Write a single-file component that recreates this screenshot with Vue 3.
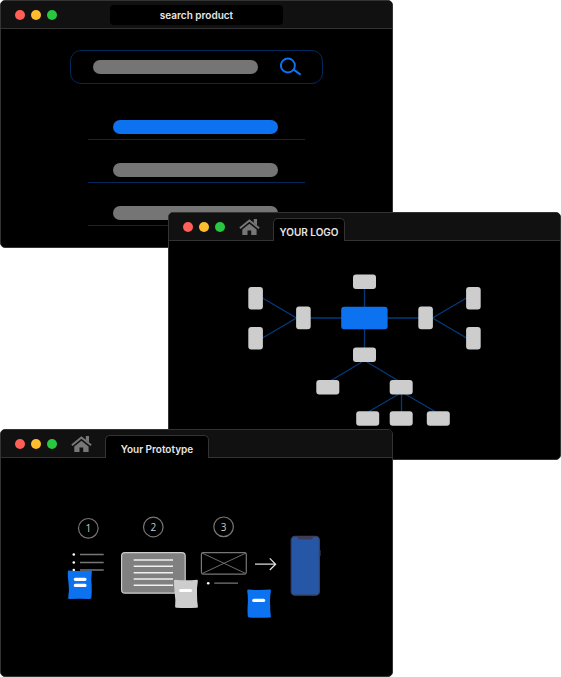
<script setup>
import { h } from 'vue'

const HomeIcon = () =>
  h('svg', { width: 21, height: 16, viewBox: '0 0 21 16', fill: '#777', 'aria-hidden': 'true' }, [
    h('path', { d: 'M3.3 10.6 L10.4 4.8 L17.6 10.6 V16 H12.2 V11.6 H8.5 V16 H3.3Z' }),
    h('path', { d: 'M14.8 0 H18 V6.4 L14.8 3.8Z' }),
    h('path', { d: 'M0.9 9.3 L10.4 1.5 L20.1 9.3', fill: 'none', stroke: '#777', 'stroke-width': 2 })
  ])

const rows = [{ active: true }, { active: false }, { active: false }]

const nodes = [
  { x: 353, y: 274.5, w: 23, h: 14.5 },
  { x: 353, y: 347.5, w: 23, h: 14.5 },
  { x: 316.3, y: 380, w: 23, h: 14.5 },
  { x: 389.7, y: 380, w: 23, h: 14.5 },
  { x: 356.2, y: 411.2, w: 23, h: 14.5 },
  { x: 389.7, y: 411.2, w: 23, h: 14.5 },
  { x: 426.8, y: 411.2, w: 23, h: 14.5 },
  { x: 248.3, y: 287, w: 14.6, h: 22.6 },
  { x: 248.3, y: 327, w: 14.6, h: 22.6 },
  { x: 296.1, y: 306.6, w: 14.6, h: 22.6 },
  { x: 418.3, y: 306.6, w: 14.6, h: 22.6 },
  { x: 466.1, y: 287, w: 14.6, h: 22.6 },
  { x: 466.1, y: 327, w: 14.6, h: 22.6 }
]

const steps = [
  { n: 1, x: 88.3, y: 528.3 },
  { n: 2, x: 153.3, y: 527 },
  { n: 3, x: 223.6, y: 526.8 }
]
const bullets = [554.5, 562.5, 570]
const cardLines = [560, 566.3, 572.7, 579, 585.3]
</script>

<template>
  <main class="stage">
    <section class="window">
      <header class="bar centered">
        <span class="lights"><i class="red"></i><i class="amber"></i><i class="green"></i></span>
        <span class="address">search product</span>
      </header>
      <div class="results">
        <form class="search" @submit.prevent>
          <input class="pill" type="text" aria-label="Search product" />
          <button class="go" type="submit" aria-label="Search">
            <svg width="22" height="20" viewBox="280 57 22 20" fill="none" stroke="#0d72f0" aria-hidden="true">
              <circle cx="287.9" cy="65.5" r="7" stroke-width="1.9" />
              <path d="M292.8 69.2 L300.6 74.6" stroke-width="2.1" />
            </svg>
          </button>
        </form>
        <ul class="list">
          <li v-for="(row, i) in rows" :key="i"><span class="pill" :class="{ active: row.active }"></span></li>
        </ul>
      </div>
    </section>

    <section class="window right">
      <header class="bar">
        <span class="lights"><i class="red"></i><i class="amber"></i><i class="green"></i></span>
        <a class="home" href="#" aria-label="Home"><HomeIcon /></a>
        <a class="tab" href="#">YOUR LOGO</a>
      </header>
      <svg class="drawing" viewBox="169 241 391 218" aria-hidden="true">
        <g fill="none" stroke="#023a7c" stroke-width="1.3">
          <path d="M364.5 282 V354 M303 318 H426" />
          <path d="M262.5 298 L296.5 318 L262.5 338" />
          <path d="M466.5 298 L432.5 318 L466.5 338" />
          <path d="M331 380.5 L362 362 M367 362 L398 380.5" />
          <path d="M369 411.5 L399 394 M401.5 394 V412 M405 394 L435 411.5" />
        </g>
        <rect v-for="(n, i) in nodes" :key="i" :x="n.x" :y="n.y" :width="n.w" :height="n.h" rx="3" fill="#cdcdcd" />
        <rect x="341.2" y="306.8" width="46.4" height="22.4" rx="3" fill="#0d72f0" />
      </svg>
    </section>

    <section class="window last">
      <header class="bar">
        <span class="lights"><i class="red"></i><i class="amber"></i><i class="green"></i></span>
        <a class="home" href="#" aria-label="Home"><HomeIcon /></a>
        <a class="tab wide" href="#">Your Prototype</a>
      </header>
      <svg class="drawing" viewBox="1 458 391 218" fill="none">
        <g v-for="s in steps" :key="s.n">
          <circle :cx="s.x" :cy="s.y" r="9.8" stroke="#777" stroke-width="1.2" />
          <text class="num" :x="s.x" :y="s.y + 4" text-anchor="middle">{{ s.n }}</text>
        </g>

        <g v-for="y in bullets" :key="y">
          <circle cx="73.8" :cy="y" r="1.3" fill="#fff" />
          <path :d="`M80 ${y} H103.7`" stroke="#777" stroke-width="1.3" />
        </g>
        <path d="M69 570.6 Q80 571.6 91 570.6 Q92.2 570.8 91.8 572.5 Q90.8 579 91.7 586 Q92 593 91.4 597.6 Q91 599 89.6 599 Q79 598.4 69.4 599 Q68 599 68.2 597.4 Q69.6 590 68.4 582 Q67.6 576 67.8 572 Q67.8 570.5 69 570.6Z" fill="#0d72f0" />
        <path d="M75.3 579.3 H85 M75.3 585.4 H85" stroke="#fff" stroke-width="3.2" stroke-linecap="round" />

        <rect x="121.6" y="552.6" width="63.6" height="40.6" rx="3.4" fill="#808080" stroke="#ccc" stroke-width="1.2" />
        <path v-for="y in cardLines" :key="y" :d="`M133.7 ${y} H173`" stroke="#f0f0f0" stroke-width="1.4" />
        <path d="M175.2 579.8 Q186 580.8 197 579.8 Q198.2 580 197.8 581.6 Q196.7 588 197 594 Q197 601 197.9 606.4 Q198 607.6 196.8 607.7 Q186 608.3 176.4 607.7 Q175 607.7 175.1 606.2 Q175.8 600 174.6 592 Q174 586 174 581 Q174.1 579.7 175.2 579.8Z" fill="#cdcdcd" />
        <path d="M180.6 590.5 H190.6" stroke="#fff" stroke-width="3" stroke-linecap="round" />

        <g stroke="#777">
          <rect x="201.4" y="552.6" width="44.9" height="21.5" rx="1.8" stroke-width="1.2" />
          <path d="M202 553 L246 573.6 M246 553 L202 573.6" stroke-width="0.9" />
          <path d="M214.3 583.2 H238" stroke-width="1.2" />
        </g>
        <circle cx="208.2" cy="583.2" r="1.3" fill="#fff" />

        <path d="M255 564.2 H275.3 M269.8 558.4 L275.6 564.2 L269.8 570" stroke="#ddd" stroke-width="1.3" />

        <path d="M248.4 589.6 Q259 590.5 270 589.6 Q271.2 589.8 270.8 591.4 Q269.8 597 270.1 604 Q270.1 611 270.9 616.2 Q271 617.4 269.8 617.5 Q260 618.2 249.2 617.5 Q247.9 617.4 247.8 616 Q247.2 610 247.9 602 Q248 595 247.2 591 Q247.2 589.5 248.4 589.6Z" fill="#0d72f0" />
        <path d="M253.8 600.4 H263.6" stroke="#fff" stroke-width="3.2" stroke-linecap="round" />

        <rect x="291.2" y="536.4" width="28.2" height="58.8" rx="3.8" fill="#2657a6" stroke="#3f3d56" stroke-width="1.2" />
        <path d="M297.6 536.6 H313 V537.5 Q312.8 539.6 310.8 539.6 H300 Q298 539.6 297.6 537.5Z" fill="#3f3d56" />
        <path d="M320.2 550 V556" stroke="#3f3d56" stroke-width="0.8" />
      </svg>
    </section>
  </main>
</template>

<style>
body {
  margin: 0;
  background: #fff;
}
</style>

<style scoped>
.stage {
  display: flex;
  flex-direction: column;
  font-family: Inter, "Liberation Sans", sans-serif;
}
.window {
  box-sizing: border-box;
  width: calc(100% - 168px);
  border: 1px solid #333;
  border-radius: 5px;
  background: #000;
  overflow: hidden;
  z-index: 0;
}
.right {
  align-self: flex-end;
  margin-top: -36px;
}
.last {
  margin-top: -31px;
}
.bar {
  display: flex;
  align-items: center;
  height: 27px;
  padding-left: 14px;
  background: #111;
  border-bottom: 1px solid #333;
}
.centered {
  display: grid;
  grid-template-columns: 1fr 173px 1fr;
  padding-right: 14px;
}
.lights {
  display: flex;
  gap: 6px;
}
.lights i {
  width: 10px;
  height: 10px;
  border-radius: 50%;
}
.red { background: #ff5f57; }
.amber { background: #febc2e; }
.green { background: #28c840; }
.address {
  height: 20px;
  border-radius: 4px;
  background: #000;
  color: #e6e6e6;
  font-size: 10px;
  font-weight: 600;
  line-height: 20px;
  text-align: center;
}
.home {
  display: flex;
  margin-left: 14px;
}
.tab {
  box-sizing: border-box;
  align-self: flex-end;
  min-width: 72px;
  height: 23px;
  margin: 0 0 -1px 13px;
  border: 1px solid #333;
  border-bottom: 0;
  border-radius: 5px 5px 0 0;
  background: #000;
  color: #e6e6e6;
  font-size: 10px;
  font-weight: 600;
  line-height: 27px;
  text-align: center;
  text-decoration: none;
  white-space: nowrap;
}
.wide {
  min-width: 104px;
}
.results {
  display: flex;
  flex-direction: column;
  align-items: center;
  padding: 21px 0;
}
.search {
  box-sizing: border-box;
  display: flex;
  align-items: center;
  width: 253px;
  max-width: 100%;
  height: 34px;
  padding: 0 20px 0 22px;
  border: 1px solid #02295c;
  border-radius: 11px;
}
.pill {
  display: block;
  box-sizing: border-box;
  width: 165px;
  height: 14px;
  padding: 0 8px;
  border: 0;
  border-radius: 7px;
  background: #757575;
  color: #fff;
  font-size: 10px;
  outline: 0;
}
.active {
  background: #0d72f0;
}
.go {
  display: flex;
  margin-left: auto;
  padding: 0;
  border: 0;
  background: none;
}
.list {
  width: 217px;
  margin: 13px 0 0;
  padding: 0;
  list-style: none;
}
.list li {
  padding: 23px 0 5px 25px;
  border-bottom: 1px solid #02295c;
}
.drawing {
  display: block;
  width: 100%;
}
.num {
  fill: #ccc;
  font-family: "Open Sans", sans-serif;
  font-size: 10px;
}
</style>
